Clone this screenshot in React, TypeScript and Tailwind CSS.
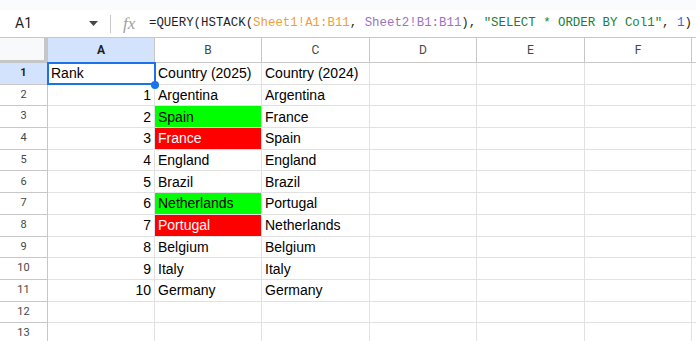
import React from "react";

// Spreadsheet view — QUERY/HSTACK example, rows 1–13, columns A–F

const COLS = ["A", "B", "C", "D", "E", "F"];

type Cell = { text: string; bg?: string; color?: string };

const ROWS: { rank: string; b: Cell; c: string }[] = [
  { rank: "Rank", b: { text: "Country (2025)" }, c: "Country (2024)" },
  { rank: "1", b: { text: "Argentina" }, c: "Argentina" },
  { rank: "2", b: { text: "Spain", bg: "bg-[#00ff00]" }, c: "France" },
  { rank: "3", b: { text: "France", bg: "bg-[#ff0000]", color: "text-white" }, c: "Spain" },
  { rank: "4", b: { text: "England" }, c: "England" },
  { rank: "5", b: { text: "Brazil" }, c: "Brazil" },
  { rank: "6", b: { text: "Netherlands", bg: "bg-[#00ff00]" }, c: "Portugal" },
  { rank: "7", b: { text: "Portugal", bg: "bg-[#ff0000]", color: "text-white" }, c: "Netherlands" },
  { rank: "8", b: { text: "Belgium" }, c: "Belgium" },
  { rank: "9", b: { text: "Italy" }, c: "Italy" },
  { rank: "10", b: { text: "Germany" }, c: "Germany" },
  { rank: "", b: { text: "" }, c: "" },
  { rank: "", b: { text: "" }, c: "" },
];

const cellBase =
  "border-r border-b border-[#e1e1e1] flex items-center px-[3px] text-[14px] leading-none text-black whitespace-nowrap overflow-hidden";

export default function App() {
  return (
    <div
      className="w-[696px] h-[341px] overflow-hidden bg-white flex flex-col"
      style={{ fontFamily: "'Liberation Sans', Arial, sans-serif" }}
    >
      {/* top strip */}
      <div className="h-[10px] bg-[#f9fbfd] shrink-0" />

      {/* formula bar */}
      <div className="h-[28px] shrink-0 flex items-center border-b border-[#c7c7c7] bg-white">
        <div className="w-[110px] flex items-center pl-[15px] pr-[12px] justify-between">
          <span className="text-[14px] text-[#1f1f1f]" style={{ fontFamily: "Roboto, 'Liberation Sans', sans-serif" }}>
            A1
          </span>
          <svg width="9" height="5" viewBox="0 0 9 5">
            <path d="M0 0 L9 0 L4.5 5 Z" fill="#444746" />
          </svg>
        </div>
        <div className="w-px h-[18px] bg-[#c7c7c7]" />
        <span
          className="ml-[12px] w-[26px] text-[17px] italic text-[#a0a0a0]"
          style={{ fontFamily: "'Liberation Serif', serif" }}
        >
          fx
        </span>
        <span
          className="text-[12.4px] text-[#1f1f1f] whitespace-pre"
          style={{ fontFamily: "'Liberation Mono', monospace" }}
        >
          =QUERY(HSTACK(<span className="text-[#f29d38]">Sheet1!A1:B11</span>,{" "}
          <span className="text-[#9b72c4]">Sheet2!B1:B11</span>),{" "}
          <span className="text-[#188038]">"SELECT * ORDER BY Col1"</span>,{" "}
          <span className="text-[#1a73e8]">1</span>)
        </span>
      </div>

      {/* grid */}
      <div className="relative grid grid-cols-[48px_107px_107px_108px_107px_108px_107px_1fr] grid-rows-[25px_repeat(13,21.7px)]">
        {/* corner */}
        <div className="bg-[#f8f9fa] border-r-4 border-b-[3px] border-[#c4c7c5]" />
        {COLS.map((c) => (
          <div
            key={c}
            className={`border-r border-b border-[#c7c7c7] flex items-center justify-center text-[12px] ${
              c === "A" ? "bg-[#d3e3fd] font-bold text-[#1f1f1f]" : "bg-white text-[#444746]"
            }`}
            style={{ fontFamily: "Roboto, 'Liberation Sans', sans-serif" }}
          >
            {c}
          </div>
        ))}
        <div className="border-b border-[#c7c7c7]" />

        {ROWS.map((r, i) => (
          <React.Fragment key={i}>
            <div
              className={`border-r border-b border-[#c7c7c7] flex items-center justify-center text-[11px] ${
                i === 0 ? "bg-[#d3e3fd] font-bold text-[#1f1f1f]" : "bg-white text-[#444746]"
              }`}
              style={{ fontFamily: "Roboto, 'Liberation Sans', sans-serif" }}
            >
              {i + 1}
            </div>
            <div className={`${cellBase} ${i === 0 ? "justify-start" : "justify-end"}`}>{r.rank}</div>
            <div className={`${cellBase} ${r.b.bg ?? ""} ${r.b.color ?? ""}`}>{r.b.text}</div>
            <div className={cellBase}>{r.c}</div>
            <div className={cellBase} />
            <div className={cellBase} />
            <div className={cellBase} />
            <div className="border-b border-[#e1e1e1]" />
          </React.Fragment>
        ))}

        {/* selection on A1 */}
        <div className="absolute left-[47px] top-[24px] w-[109px] h-[23px] border-2 border-[#1a73e8] pointer-events-none" />
        <div className="absolute left-[151px] top-[43px] w-[8px] h-[8px] rounded-full bg-[#1a73e8] pointer-events-none" />
      </div>
    </div>
  );
}
